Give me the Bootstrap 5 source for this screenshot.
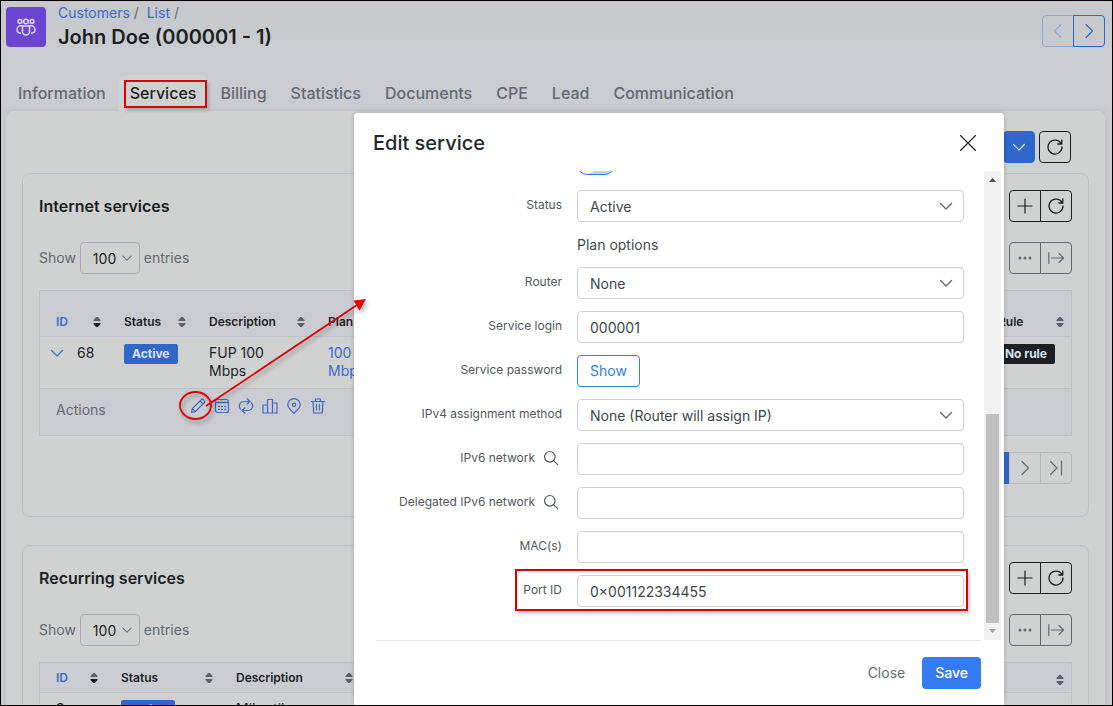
<!DOCTYPE html>
<html lang="en">
<head>
<meta charset="utf-8">
<meta name="viewport" content="width=device-width, initial-scale=1">
<title>John Doe - Services</title>
<link href="https://cdn.jsdelivr.net/npm/bootstrap@5.3.0/dist/css/bootstrap.min.css" rel="stylesheet">
<style>
  :root { --ink:#1b1f24; --muted-ink:#636970; --blue:#2f67cc; --link:#3f68cb; --line:#bec2c8; --surface:#d0d2d1; --shade:#cbccd1; }
  body { font-family: Inter, "Liberation Sans", sans-serif; font-size: 14px; line-height: 18px; color: var(--ink); background: var(--shade); }
  a { color: var(--link); text-decoration: none; }
  svg { display: block; }
  .ico { width: 16px; height: 16px; fill: none; stroke: currentColor; stroke-width: 1.2; stroke-linecap: round; stroke-linejoin: round; }
  .frame { height: 100vh; border: 1px solid #000; background: linear-gradient(#c9c6ca, #c6cacc 10px, #c7cacc 24px, var(--shade) 50px); }
  .page-head { padding: 6px 7px 0 5px; height: 74px; }
  .logo { width: 40px; height: 40px; border-radius: 4px; background: #6c46d3; color: #dcd8ec; }
  .page-title { font-size: 20px; line-height: 26px; font-weight: 600; margin: 0; }
  .crumbs { font-size: 14px; line-height: 16px; color: var(--muted-ink); padding-bottom: 3px; margin-top: -2px; }
  .tabs { padding: 0 5px; }
  .tabs .nav-link { font-size: 16px; line-height: 20px; padding: 8px 12px; color: var(--muted-ink); border-radius: 8px 8px 0 0; font-weight: 500; position: relative; }
  .tabs .nav-link.active { color: var(--ink); background: var(--surface); }
  .sheet { margin: 0 7px 0 5px; padding: 20px 16px 0; background: var(--surface); border-radius: 8px; box-shadow: 0 0 6px #babcc3; }
  .toolbar { padding-right: 18px; margin-bottom: 10px; }
  .panel { border: 1px solid var(--line); border-radius: 8px; padding: 16px; margin-bottom: 28px; }
  .panel h2 { font-size: 16px; line-height: 20px; font-weight: 600; margin: 0; }
  .btn { font-size: 14px; line-height: 18px; padding: 6px 12px; border-radius: 4px; }
  .btn-sq { width: 32px; height: 32px; padding: 0; display: inline-flex; align-items: center; justify-content: center; border: 1px solid var(--ink); color: var(--ink); }
  .btn-group .btn-sq { flex: none; }
  .btn-sq.soft { border-color: var(--muted-ink); color: var(--muted-ink); }
  .btn-sq.pale { border-color: #b6bbbf; color: var(--muted-ink); }
  .btn-sq.blue { border-color: var(--blue); color: var(--blue); }
  .btn-sq.blue-dim { border-color: #8fa8d4; color: #8fa8d4; }
  .btn-sq.full { background: var(--blue); border-color: var(--blue); color: #dde3ee; }
  .form-select { --bs-form-select-bg-img: url("data:image/svg+xml,%3csvg xmlns='http://www.w3.org/2000/svg' viewBox='0 0 16 16'%3e%3cpath fill='none' stroke='%23646b72' stroke-width='1.4' stroke-linecap='round' stroke-linejoin='round' d='m2.500 5.500 5.500 5.500 5.500-5.500'/%3e%3c/svg%3e"); background-image: var(--bs-form-select-bg-img); }
  .length select { width: 60px; height: 32px; padding: 0 20px 0 12px; font-size: 14px; background-color: transparent; background-size: 12px; background-position: right 6px center; border-color: #a7acb3; border-radius: 4px; color: var(--ink); }
  .length { color: var(--muted-ink); margin: 20px 0 16px; }
  .grid-table { table-layout: fixed; width: 100%; border: 1px solid var(--line); border-collapse: separate; border-spacing: 0; }
  .grid-table th, .grid-table td { padding: 7px 16px 8px; vertical-align: top; }
  .grid-table th { background: var(--shade); font-size: 12px; line-height: 15px; font-weight: 600; vertical-align: bottom; padding-right: 7px; padding-bottom: 7px; white-space: nowrap; }
  .grid-table td { border-top: 1px solid var(--line); }
  .tall th { height: 45px; }
  .grid-table .foot-row td { background: var(--shade); padding: 9px 16px 8px; height: 47px; }
  .act-label { width: 85px; color: var(--muted-ink); padding-top: 3px; }
  .act-list { margin-left: 49px; margin-bottom: 5px; }
  .sorter { width: 8px; height: 10px; fill: #5c6268; }
  .tag { display: inline-block; font-size: 12px; line-height: 20px; font-weight: 700; padding: 0 8px; border-radius: 2px; background: var(--blue); color: #dce2ee; vertical-align: top; }
  .tag.dark { background: #1c2025; }
  .row-toggle { margin-left: 1px; }
  .w-id { width: 68px; } .w-st { width: 85px; } .w-de { width: 119px; } .w-ru { width: 89px; }
  .w2-id { width: 65px; } .w2-st { width: 115px; } .w2-de { width: 140px; } .w2-x { width: 90px; }

  .dialog-layer { position: absolute; inset: 113px 109px 1px 0; pointer-events: none; }
  .dialog { pointer-events: auto; width: 650px; max-width: 100%; background: #fff; color: #444a50; border-radius: 4px 4px 0 0; box-shadow: 0 0 5px rgba(0,0,0,.22); }
  .dialog-head { padding: 18px 28px 0 19px; height: 58px; color: #22282e; }
  .dialog-head h1 { font-size: 20px; line-height: 24px; font-weight: 500; margin: 0; }
  .x-btn { border: 0; background: none; padding: 0; height: 24px; color: #22282e; }
  .scroll-area { height: 469px; }
  .fields { padding: 0 20px 33px 0; gap: 12px; overflow: hidden; }
  .field { display: grid; grid-template-columns: 208px 1fr; column-gap: 15px; align-items: center; position: relative; }
  .field > label { font-size: 12px; line-height: 16px; text-align: right; color: #51575d; padding-bottom: 2px; display: flex; justify-content: flex-end; align-items: center; gap: 8px; }
  .field > label .ico { margin-right: 3px; }
  .field .form-control, .field .form-select { height: 32px; font-size: 14px; padding: 0 12px; border-color: #ccd0db; border-radius: 4px; color: #40464c; }
  .field .form-select { background-size: 16px; background-position: right 9px center; }
  .form-switch .form-check-input { width: 38px; height: 20px; margin: 0; background-color: #cdd1d6; border-color: #357bf2; --bs-form-switch-bg: url("data:image/svg+xml,%3csvg xmlns='http://www.w3.org/2000/svg' viewBox='-4 -4 8 8'%3e%3ccircle r='4' fill='%23fff'/%3e%3c/svg%3e"); background-image: var(--bs-form-switch-bg); }
  .switch-row { margin-bottom: 3px; }
  .sub { line-height: 21px; }
  .btn-line { border: 1px solid #357bf2; color: #357bf2; }
  .track { width: 17px; flex: none; margin-right: 3px; background: #f1f1f1; }
  .track svg { width: 17px; height: 17px; }
  .thumb { width: 13px; height: 209px; background: #c1c1c1; margin: auto 2px 0; }
  .dialog-foot { margin: 0 23px 0 22px; border-top: 1px solid #e4e8ee; padding: 16px 0; }
  .btn-main { background: #357bf2; color: #fff; font-weight: 500; }
  .btn-quiet { color: #666d74; }
  .ring { position: absolute; border: 2px solid #dc0000; box-shadow: 2px 3px 3px rgba(0,0,0,.2); pointer-events: none; }
  .ring-tab { inset: 5px 1px 3px 6px; }
  .ring-field { inset: -6px -4px -4px 161px; }
  .pointer { position: absolute; left: 175px; top: 285px; width: 200px; height: 145px; pointer-events: none; filter: drop-shadow(2px 3px 2px rgba(0,0,0,.3)); }
</style>
</head>
<body>
<svg class="d-none" xmlns="http://www.w3.org/2000/svg">
  <symbol id="down" viewBox="0 0 16 16"><path d="m2.500 5.500 5.500 5.500 5.500-5.500"/></symbol>
  <symbol id="left" viewBox="0 0 16 16"><path d="m11 1.500-6.500 6.500 6.500 6.500"/></symbol>
  <symbol id="right" viewBox="0 0 16 16"><path d="m5 1.500 6.500 6.500-6.500 6.500"/></symbol>
  <symbol id="last" viewBox="0 0 16 16"><path d="m2.500 1.500 6.500 6.500-6.500 6.500M13.500 1v14"/></symbol>
  <symbol id="plus" viewBox="0 0 16 16"><path d="M8 1v14M1 8h14"/></symbol>
  <symbol id="reload" viewBox="0 0 16 16"><path d="M14.300 5A7 7 0 1 0 15 8M14.800 1v4h-4" stroke-width="1.300"/></symbol>
  <symbol id="dots" viewBox="0 0 16 16"><g fill="currentColor" stroke="none"><circle cx="3" cy="8" r="1.500"/><circle cx="8" cy="8" r="1.500"/><circle cx="13" cy="8" r="1.500"/></g></symbol>
  <symbol id="export" viewBox="0 0 16 16"><path d="M.8 2.500v11M3.500 8h12M11 3.500 15.500 8 11 12.500"/></symbol>
  <symbol id="sort" viewBox="0 0 8 10"><path d="M3.200 0h1.600L7.500 3v1h-7V3ZM3.200 10h1.600L7.500 7V6h-7v1Z"/></symbol>
  <symbol id="sort-down" viewBox="0 0 8 10"><path d="M3.200 0h1.600L7.500 3v1h-7V3Z"/><path fill="#1b1f24" d="M3.200 10h1.600L7.500 7V6h-7v1Z"/></symbol>
  <symbol id="search" viewBox="0 0 16 16"><circle cx="6.800" cy="6.800" r="5.300"/><path d="m10.800 10.800 4 4"/></symbol>
</svg>

<div class="frame overflow-hidden position-relative">
  <header class="page-head d-flex">
    <div class="logo d-flex align-items-center justify-content-center flex-shrink-0 me-2">
      <svg width="20" height="18" viewBox="0 0 20 18" fill="none" stroke="currentColor" stroke-width="1.500"><circle cx="10" cy="3.500" r="2.300"/><circle cx="4" cy="3.500" r="1.900"/><circle cx="16" cy="3.500" r="1.900"/><path d="M6.500 8h7v5.500a3.500 3.500 0 0 1-7 0ZM6.500 7.800H4.800a3.800 3.800 0 0 0-3.800 3.800c0 2.200 1.500 3.600 4 3.600M13.500 7.800h1.700a3.800 3.800 0 0 1 3.800 3.800c0 2.200-1.500 3.600-4 3.600"/></svg>
    </div>
    <div class="flex-grow-1 ms-1">
      <nav class="crumbs" aria-label="Breadcrumb"><a href="#">Customers</a>&nbsp;/&nbsp; <a href="#">List</a>&nbsp;/</nav>
      <h1 class="page-title">John Doe (000001 - 1)</h1>
    </div>
    <div class="btn-group align-self-start mt-2">
      <button class="btn btn-sq blue-dim" aria-label="Previous"><svg class="ico"><use href="#left"/></svg></button>
      <button class="btn btn-sq blue" aria-label="Next"><svg class="ico"><use href="#right"/></svg></button>
    </div>
  </header>

  <nav class="nav tabs">
    <a class="nav-link" href="#">Information</a>
    <a class="nav-link active" href="#">Services<span class="ring ring-tab"></span></a>
    <a class="nav-link" href="#">Billing</a>
    <a class="nav-link" href="#">Statistics</a>
    <a class="nav-link" href="#">Documents</a>
    <a class="nav-link" href="#">CPE</a>
    <a class="nav-link" href="#">Lead</a>
    <a class="nav-link" href="#">Communication</a>
  </nav>

  <main class="sheet">
    <div class="toolbar d-flex justify-content-end gap-1">
      <button class="btn btn-sq full" aria-label="More"><svg class="ico"><use href="#down"/></svg></button>
      <button class="btn btn-sq" aria-label="Reload"><svg class="ico"><use href="#reload"/></svg></button>
    </div>

    <section class="panel">
      <div class="d-flex justify-content-between align-items-center">
        <h2>Internet services</h2>
        <div class="btn-group">
          <button class="btn btn-sq" aria-label="Add"><svg class="ico"><use href="#plus"/></svg></button>
          <button class="btn btn-sq" aria-label="Reload"><svg class="ico"><use href="#reload"/></svg></button>
        </div>
      </div>
      <div class="length d-flex justify-content-between align-items-center">
        <div class="d-flex align-items-center gap-1">
          <label for="len1">Show</label>
          <select id="len1" class="form-select"><option>100</option></select>
          <span>entries</span>
        </div>
        <div class="btn-group">
          <button class="btn btn-sq soft" aria-label="More"><svg class="ico"><use href="#dots"/></svg></button>
          <button class="btn btn-sq soft" aria-label="Export"><svg class="ico"><use href="#export"/></svg></button>
        </div>
      </div>
      <table class="grid-table">
        <colgroup><col class="w-id"><col class="w-st"><col class="w-de"><col><col class="w-ru"></colgroup>
        <thead class="tall">
          <tr>
            <th><div class="d-flex justify-content-between align-items-center"><a href="#">ID</a><svg class="sorter"><use href="#sort-down"/></svg></div></th>
            <th><div class="d-flex justify-content-between align-items-center">Status<svg class="sorter"><use href="#sort"/></svg></div></th>
            <th><div class="d-flex justify-content-between align-items-center">Description<svg class="sorter"><use href="#sort"/></svg></div></th>
            <th>Plan</th>
            <th><div class="d-flex justify-content-between align-items-center">Rule<svg class="sorter"><use href="#sort"/></svg></div></th>
          </tr>
        </thead>
        <tbody>
          <tr>
            <td class="ps-2 pe-0"><div class="d-flex align-items-center gap-2"><a href="#" class="row-toggle me-1" aria-label="Collapse"><svg class="ico"><use href="#down"/></svg></a>68</div></td>
            <td><span class="tag">Active</span></td>
            <td>FUP 100 Mbps</td>
            <td><a href="#">100<br>Mbps</a></td>
            <td class="px-0 text-end"><span class="tag dark me-3">No rule</span></td>
          </tr>
          <tr class="foot-row">
            <td colspan="5">
              <div class="d-flex">
                <div class="act-label">Actions</div>
                <div class="act-list d-flex gap-2">
                  <a href="#" aria-label="Edit"><svg class="ico"><path d="m1.500 14.500.8-3.800L11.500 1.500c1-1 4 1.800 3 3L5.300 13.700ZM10 3l3 3M2.300 10.700l3 3"/></svg></a>
                  <a href="#" aria-label="Calendar"><svg class="ico"><rect x="1.500" y="1.500" width="13" height="13" rx="2"/><path d="M1.500 4.500h13M4.500 11.500h1M7.500 11.500h1M4.500 8.500h1M7.500 8.500h1M10.800 8.500h1M10.800 11.500h1" stroke-width="1.300"/></svg></a>
                  <a href="#" aria-label="Change plan"><svg class="ico"><path d="M9 .8l3 2.700-3 2.700M12 3.500H5.500A4.500 4.500 0 0 0 2.500 11M7 9.800l-3 2.700 3 2.700M4 12.500h6.500a4.500 4.500 0 0 0 3-7.500"/></svg></a>
                  <a href="#" aria-label="Statistics"><svg class="ico"><path d="M1 7h4.500v8H1ZM5.500 1.500h5V15h-5ZM10.500 5H15v10h-4.500Z"/></svg></a>
                  <a href="#" aria-label="Location"><svg class="ico"><path d="M8 15.200C5 12.500 1.800 9.800 1.800 6.800a6.200 6.200 0 0 1 12.400 0c0 3-3.200 5.700-6.200 8.400Z"/><circle cx="8" cy="6.800" r="1.700"/></svg></a>
                  <a href="#" aria-label="Delete"><svg class="ico"><path d="M1.500 3.500h13M5.500 3.500V1h5v2.500M3 3.500l.7 11.500h8.600L13 3.500M6.500 6.500v5.500M9.500 6.500v5.500"/></svg></a>
                </div>
              </div>
            </td>
          </tr>
        </tbody>
      </table>
      <div class="d-flex justify-content-end my-3">
        <div class="btn-group">
          <button class="btn btn-sq full">1</button>
          <button class="btn btn-sq pale" aria-label="Next page"><svg class="ico"><use href="#right"/></svg></button>
          <button class="btn btn-sq pale" aria-label="Last page"><svg class="ico"><use href="#last"/></svg></button>
        </div>
      </div>
    </section>

    <section class="panel">
      <div class="d-flex justify-content-between align-items-center">
        <h2>Recurring services</h2>
        <div class="btn-group">
          <button class="btn btn-sq" aria-label="Add"><svg class="ico"><use href="#plus"/></svg></button>
          <button class="btn btn-sq" aria-label="Reload"><svg class="ico"><use href="#reload"/></svg></button>
        </div>
      </div>
      <div class="length d-flex justify-content-between align-items-center">
        <div class="d-flex align-items-center gap-1">
          <label for="len2">Show</label>
          <select id="len2" class="form-select"><option>100</option></select>
          <span>entries</span>
        </div>
        <div class="btn-group">
          <button class="btn btn-sq soft" aria-label="More"><svg class="ico"><use href="#dots"/></svg></button>
          <button class="btn btn-sq soft" aria-label="Export"><svg class="ico"><use href="#export"/></svg></button>
        </div>
      </div>
      <table class="grid-table">
        <colgroup><col class="w2-id"><col class="w2-st"><col class="w2-de"><col><col class="w2-x"></colgroup>
        <thead>
          <tr>
            <th><div class="d-flex justify-content-between align-items-center"><a href="#">ID</a><svg class="sorter"><use href="#sort-down"/></svg></div></th>
            <th><div class="d-flex justify-content-between align-items-center">Status<svg class="sorter"><use href="#sort"/></svg></div></th>
            <th><div class="d-flex justify-content-between align-items-center">Description<svg class="sorter"><use href="#sort"/></svg></div></th>
            <th></th>
            <th><div class="d-flex justify-content-end"><svg class="sorter"><use href="#sort"/></svg></div></th>
          </tr>
        </thead>
        <tbody>
          <tr><td>9</td><td><span class="tag">Active</span></td><td>Mikrotik</td><td></td><td></td></tr>
        </tbody>
      </table>
    </section>
  </main>
</div>

<div class="dialog-layer d-flex justify-content-end">
  <div class="dialog overflow-hidden" role="dialog" aria-labelledby="dlg">
    <div class="dialog-head d-flex justify-content-between">
      <h1 id="dlg">Edit service</h1>
      <button class="x-btn" aria-label="Close dialog"><svg class="ico"><path d="m.5.5 15 15M15.500.5l-15 15" stroke-width="1.300"/></svg></button>
    </div>
    <div class="scroll-area d-flex">
      <form class="fields flex-grow-1 d-flex flex-column justify-content-end">
        <div class="field switch-row"><span></span><div class="form-switch p-0 lh-1 d-flex"><input class="form-check-input" type="checkbox" role="switch" aria-label="Enabled"></div></div>
        <div class="field"><label for="f1">Status</label><select id="f1" class="form-select"><option>Active</option></select></div>
        <div class="field"><span></span><div class="sub">Plan options</div></div>
        <div class="field"><label for="f2">Router</label><select id="f2" class="form-select"><option>None</option></select></div>
        <div class="field"><label for="f3">Service login</label><input id="f3" class="form-control" value="000001"></div>
        <div class="field"><label for="f4">Service password</label><div class="d-flex"><button id="f4" type="button" class="btn btn-line">Show</button></div></div>
        <div class="field"><label for="f5">IPv4 assignment method</label><select id="f5" class="form-select"><option>None (Router will assign IP)</option></select></div>
        <div class="field"><label for="f6">IPv6 network<svg class="ico"><use href="#search"/></svg></label><input id="f6" class="form-control"></div>
        <div class="field"><label for="f7">Delegated IPv6 network<svg class="ico"><use href="#search"/></svg></label><input id="f7" class="form-control"></div>
        <div class="field"><label for="f8">MAC(s)</label><input id="f8" class="form-control"></div>
        <div class="field"><label for="f9">Port ID</label><input id="f9" class="form-control" value="0×001122334455"><span class="ring ring-field"></span></div>
      </form>
      <div class="track d-flex flex-column" aria-hidden="true">
        <svg viewBox="0 0 17 17"><path fill="#505050" d="M5 11h7L8.500 7Z"/></svg>
        <div class="thumb"></div>
        <svg viewBox="0 0 17 17"><path fill="#a3a3a3" d="M5 6h7l-3.500 4Z"/></svg>
      </div>
    </div>
    <div class="dialog-foot d-flex justify-content-end gap-1">
      <button class="btn btn-quiet">Close</button>
      <button class="btn btn-main">Save</button>
    </div>
  </div>
</div>

<svg class="pointer" viewBox="0 0 200 145" fill="none" stroke="#dc0000" stroke-width="1.800" aria-hidden="true">
  <ellipse cx="20.500" cy="120.500" rx="15.500" ry="13.500"/>
  <path d="M31 121 182 20"/>
  <path fill="#dc0000" stroke="none" d="M191 14 184.500 25.500 178.500 15.500Z"/>
</svg>
<script src="https://cdn.jsdelivr.net/npm/bootstrap@5.3.0/dist/js/bootstrap.bundle.min.js"></script>
</body>
</html>
